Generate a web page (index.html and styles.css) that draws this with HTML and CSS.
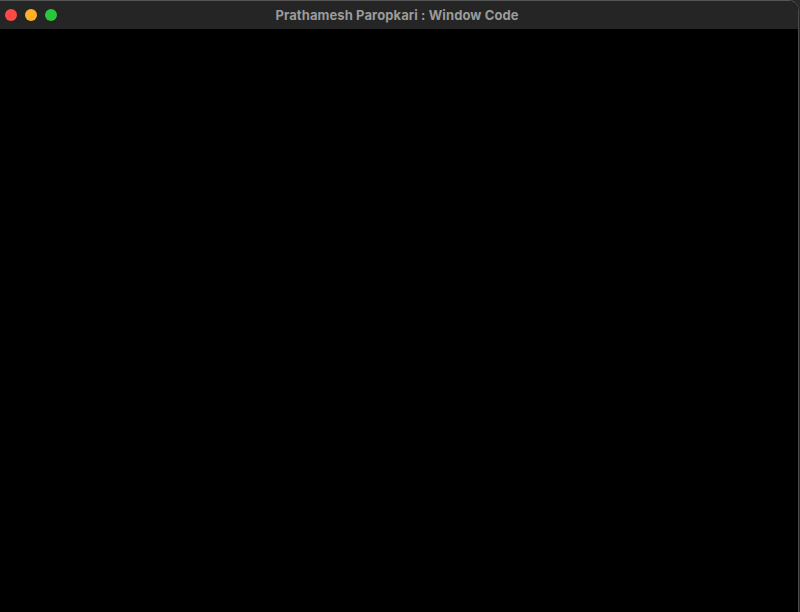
FILE: index.html
```html
<!DOCTYPE html>
<html>
<head>
<meta charset="utf-8">
<link rel="stylesheet" href="styles.css">
</head>
<body>
<div class="window">
  <div class="titlebar">
    <div class="lights">
      <span class="light red"></span>
      <span class="light yellow"></span>
      <span class="light green"></span>
    </div>
    <div class="title">Prathamesh Paropkari : Window Code</div>
  </div>
  <div class="content"></div>
</div>
</body>
</html>
```
FILE: styles.css
```css
html, body {
  margin: 0;
  padding: 0;
  width: 800px;
  height: 612px;
  background: #2a2a2a;
  overflow: hidden;
}
.window {
  width: 799px;
  height: 612px;
  display: flex;
  flex-direction: column;
  background: #000;
  border-top-right-radius: 10px;
  border-right: 1px solid #4a4a4a;
  border-top: 1px solid #555;
  box-sizing: border-box;
  overflow: hidden;
}
.titlebar {
  height: 28px;
  flex: none;
  background: #252525;
  position: relative;
  display: flex;
  align-items: center;
  justify-content: center;
}
.lights {
  position: absolute;
  left: 5px;
  top: 8px;
  display: flex;
  gap: 8px;
}
.light {
  width: 12px;
  height: 12px;
  border-radius: 50%;
  display: block;
}
.red { background: #fe4a45; }
.yellow { background: #feb028; }
.green { background: #2ac73b; }
.title {
  font-family: "Inter", "Liberation Sans", sans-serif;
  font-weight: 700;
  font-size: 13px;
  letter-spacing: 0.1px;
  color: #9b9b9b;
  margin-left: -4px;
}
.content {
  flex: 1;
  background: #000;
}
```
